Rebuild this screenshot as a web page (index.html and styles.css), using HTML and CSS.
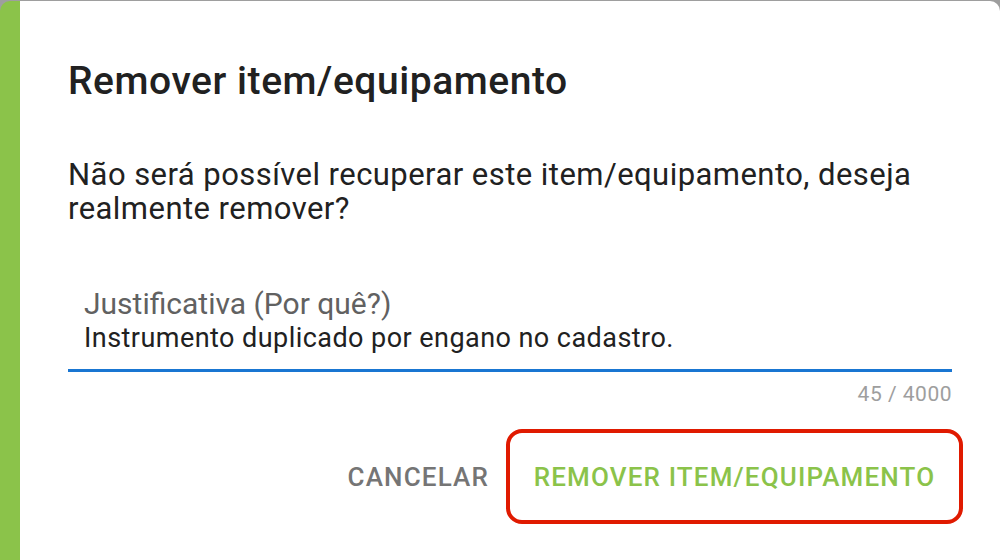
FILE: index.html
```html
<!DOCTYPE html>
<html lang="pt-BR">
<head>
<meta charset="utf-8">
<title>Remover item/equipamento</title>
<link rel="stylesheet" href="styles.css">
</head>
<body>
<div class="dialog">
  <h2 class="title">Remover item/equipamento</h2>
  <p class="text">Não será possível recuperar este item/equipamento, deseja realmente remover?</p>
  <div class="field">
    <div class="field-box">
      <label class="label">Justificativa (Por quê?)</label>
      <div class="value">Instrumento duplicado por engano no cadastro.</div>
    </div>
    <div class="counter">45 / 4000</div>
  </div>
  <div class="actions">
    <button class="btn btn-cancel">CANCELAR</button>
    <div class="highlight">
      <button class="btn btn-remove">REMOVER ITEM/EQUIPAMENTO</button>
    </div>
  </div>
</div>
</body>
</html>
```
FILE: styles.css
```css
html, body {
  margin: 0;
  padding: 0;
}
body {
  background: #9e9e9e;
  width: 1000px;
  height: 560px;
  overflow: hidden;
  font-family: Roboto, "Liberation Sans", sans-serif;
}
.dialog {
  margin-top: 1px;
  height: 580px;
  background: #ffffff;
  border-left: 20px solid #8bc34a;
  border-radius: 10px;
  padding: 58px 48px 0 48px;
  box-sizing: border-box;
}
.title {
  margin: 0;
  font-size: 39px;
  line-height: 44px;
  font-weight: 500;
  letter-spacing: 0.55px;
  color: #212121;
}
.text {
  margin: 55px 0 0 0;
  font-size: 31px;
  line-height: 34px;
  letter-spacing: 0.45px;
  color: #212121;
}
.field {
  margin-top: 61px;
}
.field-box {
  padding: 0 16px 14px 16px;
  border-bottom: 3px solid #1976d2;
}
.label {
  display: block;
  font-size: 30px;
  line-height: 34px;
  color: #616161;
}
.value {
  font-size: 27px;
  line-height: 34px;
  letter-spacing: 0.45px;
  color: #212121;
}
.counter {
  text-align: right;
  font-size: 21px;
  line-height: 28px;
  letter-spacing: 0.5px;
  margin-top: 8px;
  color: #9e9e9e;
}
.actions {
  display: flex;
  justify-content: flex-end;
  align-items: center;
  gap: 17px;
  margin-top: 21px;
  margin-right: -11px;
}
.btn {
  background: none;
  border: none;
  font-family: Roboto, "Liberation Sans", sans-serif;
  font-size: 26px;
  font-weight: 500;
  letter-spacing: 1.15px;
  padding: 0;
  cursor: pointer;
}
.btn-cancel {
  color: #757575;
}
.highlight {
  border: 4px solid #e01a00;
  border-radius: 16px;
  width: 457px;
  height: 95px;
  box-sizing: border-box;
  display: flex;
  align-items: center;
  justify-content: center;
}
.btn-remove {
  color: #8bc34a;
}
```
